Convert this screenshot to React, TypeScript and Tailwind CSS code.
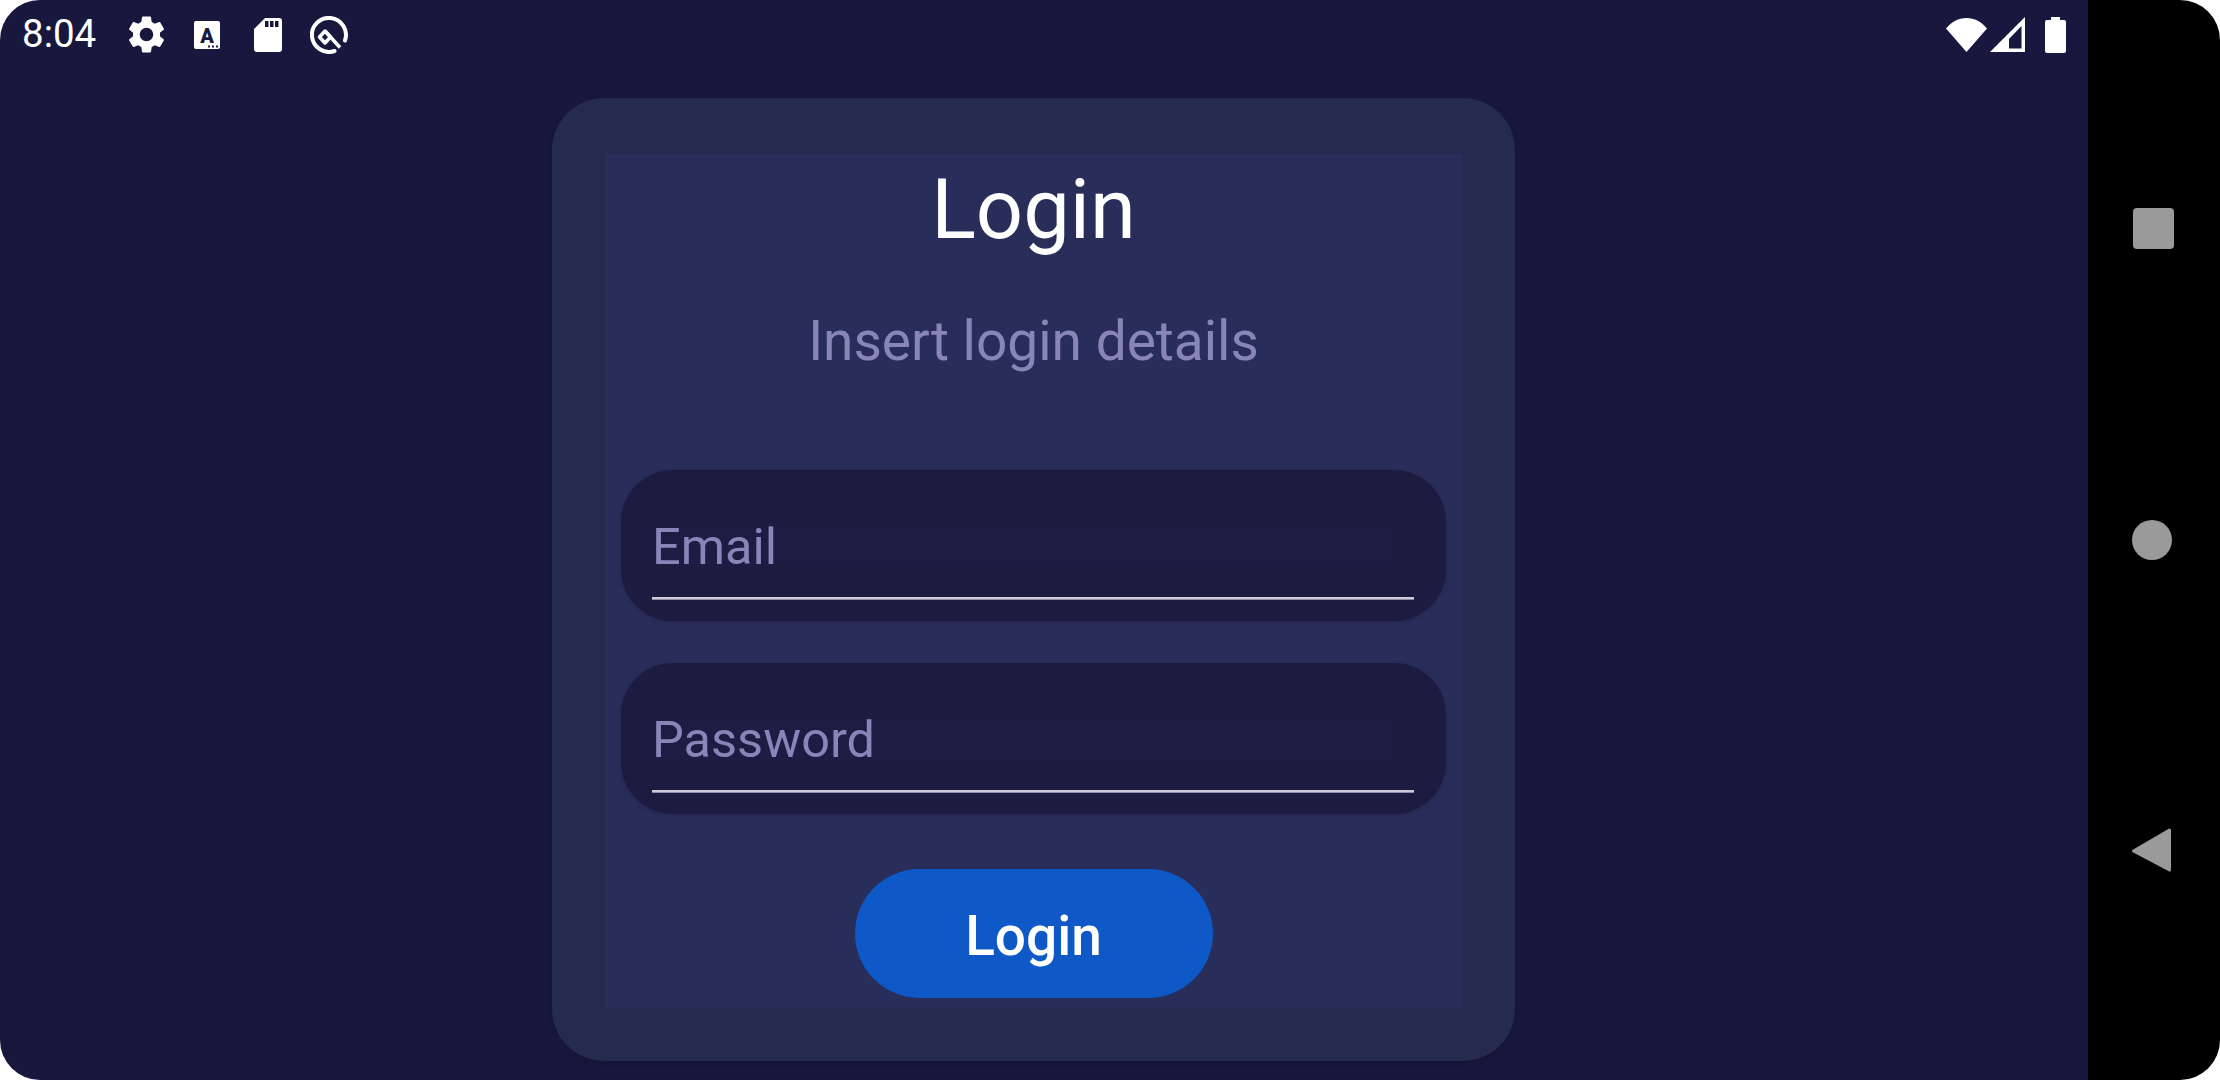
const FONT = "font-['Roboto',sans-serif]";

function Gear() {
  return (
    <svg viewBox="0 0 24 24" className="h-[45px] w-[45px]" fill="#fff">
      <path d="M19.14 12.94c.04-.3.06-.61.06-.94 0-.32-.02-.64-.07-.94l2.03-1.58a.49.49 0 0 0 .12-.61l-1.92-3.32a.488.488 0 0 0-.59-.22l-2.39.96c-.5-.38-1.03-.7-1.62-.94l-.36-2.54a.484.484 0 0 0-.48-.41h-3.84c-.24 0-.43.17-.47.41l-.36 2.54c-.59.24-1.13.57-1.62.94l-2.39-.96c-.22-.08-.47 0-.59.22L2.74 8.87c-.12.21-.08.47.12.61l2.03 1.58c-.05.3-.09.63-.09.94s.02.64.07.94l-2.03 1.58a.49.49 0 0 0-.12.61l1.92 3.32c.12.22.37.29.59.22l2.39-.96c.5.38 1.03.7 1.62.94l.36 2.54c.05.24.24.41.48.41h3.84c.24 0 .44-.17.47-.41l.36-2.54c.59-.24 1.13-.56 1.62-.94l2.39.96c.22.08.47 0 .59-.22l1.92-3.32c.12-.22.07-.47-.12-.61l-2.01-1.58zM12 15.6c-1.98 0-3.6-1.62-3.6-3.6s1.62-3.6 3.6-3.6 3.6 1.62 3.6 3.6-1.62 3.6-3.6 3.6z" />
    </svg>
  );
}

function FontIcon() {
  return (
    <svg viewBox="0 0 26 28" className="h-[28px] w-[26px]">
      <rect width="26" height="28" rx="2" fill="#fff" />
      <text x="13" y="22" textAnchor="middle" fontFamily="Roboto" fontWeight="900" fontSize="20" fill="#18183f">
        A
      </text>
      <rect x="14" y="24.5" width="2" height="2" fill="#18183f" />
      <rect x="18" y="24.5" width="2" height="2" fill="#18183f" />
      <rect x="22" y="24.5" width="2" height="2" fill="#18183f" />
    </svg>
  );
}

function SdCard() {
  return (
    <svg viewBox="0 0 28 34" className="h-[34px] w-[28px]">
      <path
        fill="#fff"
        fillRule="evenodd"
        d="M11 0h14a3 3 0 0 1 3 3v28a3 3 0 0 1-3 3H3a3 3 0 0 1-3-3V11zM11 3v6h3.5V3zM16 3v6h3.5V3zM21 3v6h3.5V3z"
      />
    </svg>
  );
}

function QLogo() {
  return (
    <svg viewBox="0 0 38 38" className="h-[38px] w-[38px]" fill="none" stroke="#fff">
      <path strokeWidth="4" d="M24.5 35A17 17 0 1 1 35 24.5" strokeLinecap="round" />
      <path strokeWidth="3.5" d="M15 15L9.5 21l5.5 6 5.5-6z" strokeLinejoin="round" />
      <path strokeWidth="3.5" d="M15 15L30 31.5" />
    </svg>
  );
}

function StatusBar() {
  return (
    <div className="flex h-[69px] shrink-0 items-center pl-[22px] pr-[22px]">
      <span className="w-[102px] text-[38.5px] leading-none text-white">8:04</span>
      <div className="flex items-center">
        <Gear />
        <div className="ml-[25px]"><FontIcon /></div>
        <div className="ml-[34px]"><SdCard /></div>
        <div className="ml-[28px]"><QLogo /></div>
      </div>
      <div className="ml-auto flex items-center">
        <svg viewBox="0 0 41 34" className="h-[34px] w-[41px]">
          <path fill="#fff" d="M0 10.5C5.5 4 12.5 0 20.5 0S35.5 4 41 10.5L20.5 34z" />
        </svg>
        <svg viewBox="0 0 35 35" className="ml-[3px] h-[35px] w-[35px]">
          <path fill="#fff" fillRule="evenodd" d="M35 0v35H0zM31.5 9L19 22v9.5h12.5z" />
        </svg>
        <svg viewBox="0 0 21 36" className="ml-[20px] h-[36px] w-[21px]">
          <path fill="#fff" d="M6 0h9v3h4a2 2 0 0 1 2 2v29a2 2 0 0 1-2 2H2a2 2 0 0 1-2-2V5a2 2 0 0 1 2-2h4z" />
        </svg>
      </div>
    </div>
  );
}

function Field({ label }: { label: string }) {
  return (
    <div className="flex h-[151px] w-[825px] flex-col rounded-[52px] bg-[#1c1c40] pl-[31px] pr-[32px] pt-[57px] shadow-[0_1px_4px_rgba(0,0,0,0.18)]">
      <div className="flex h-[40px] w-[741px] items-center bg-[#1d1d43] text-[50.5px] text-[#8885b9]">
        {label}
      </div>
      <div className="mt-[30px] h-[3px] w-[762px] border-b border-[#8f8ca8] bg-[#cfc9d9]" />
    </div>
  );
}

function NavBar() {
  return (
    <div className="flex w-[132px] shrink-0 flex-col items-center bg-black pt-[208px]">
      <div className="h-[41px] w-[41px] translate-x-[-1px] rounded-[4px] bg-[#9a9a9a]" />
      <div className="mt-[271px] h-[40px] w-[40px] translate-x-[-2px] rounded-full bg-[#9a9a9a]" />
      <svg viewBox="0 0 39 44" className="mt-[268px] h-[44px] w-[39px] translate-x-[-3px]">
        <path
          fill="#9a9a9a"
          stroke="#9a9a9a"
          strokeWidth="3"
          strokeLinejoin="round"
          d="M37.5 2v40L1.5 23z"
        />
      </svg>
    </div>
  );
}

export default function App() {
  return (
    <div className={`h-[1080px] w-[2220px] bg-white ${FONT}`}>
      <div className="flex h-full overflow-hidden rounded-[40px]">
        <div className="flex w-[2088px] flex-col bg-[#18183f]">
          <StatusBar />
          <div className="flex flex-1 pl-[552px] pt-[29px]">
            <div className="h-[963px] w-[963px] rounded-[52px] bg-[#252b4e] px-[53px] pb-[53px] pt-[56px] shadow-[0_2px_6px_rgba(0,0,0,0.2)]">
              <div className="flex h-full flex-col items-center bg-[#292d5a]">
                <h1 className="mt-[7px] text-[83px] font-normal leading-[97px] text-white">Login</h1>
                <p className="mt-[51px] text-[55px] leading-[64px] text-[#8885b9]">Insert login details</p>
                <div className="mt-[97px] flex flex-col gap-[42px]">
                  <Field label="Email" />
                  <Field label="Password" />
                </div>
                <button className="mt-[55px] h-[129px] w-[358px] rounded-full bg-[#0e58c7] pt-[5px] text-[55px] font-medium text-white">
                  Login
                </button>
              </div>
            </div>
          </div>
        </div>
        <NavBar />
      </div>
    </div>
  );
}
